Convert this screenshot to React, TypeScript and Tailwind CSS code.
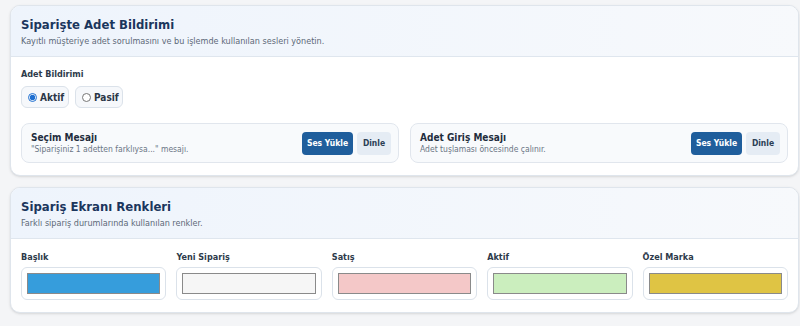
const font = { fontFamily: '"DejaVu Sans Condensed", "DejaVu Sans", sans-serif' };

function SoundCard({ title, desc }: { title: string; desc: string }) {
  return (
    <div className="flex items-center justify-between rounded-lg border border-[#e1e6ed] bg-[#f8fafc] py-[7px] pl-[9px] pr-[7px]">
      <div>
        <div className="text-[10px] font-bold leading-[13px] text-[#1f2d3d]">{title}</div>
        <div className="text-[8.5px] leading-[11px] text-[#6b7685]">{desc}</div>
      </div>
      <div className="flex gap-[4px]">
        <button className="h-[23px] w-[51px] rounded-[4px] bg-[#1f5e9c] text-[8.5px] font-bold text-white">
          Ses Yükle
        </button>
        <button className="h-[23px] w-[34px] rounded-[4px] bg-[#e5ecf4] text-[8.5px] font-bold text-[#2b3f55]">
          Dinle
        </button>
      </div>
    </div>
  );
}

function CardHeader({ title, desc }: { title: string; desc: string }) {
  return (
    <div className="border-b border-[#dfe6ee] bg-gradient-to-r from-[#eef4fc] to-[#f7f9fc] px-[10px] pb-[8px] pt-[10px]">
      <h2 className="text-[13px] font-bold leading-[18px] text-[#1b365d]">{title}</h2>
      <p className="mt-[1px] text-[9px] leading-[13px] text-[#5d6978]">{desc}</p>
    </div>
  );
}

const colors = [
  { label: 'Başlık', color: 'bg-[#369ddc]' },
  { label: 'Yeni Sipariş', color: 'bg-[#f6f6f6]' },
  { label: 'Satış', color: 'bg-[#f4c8c8]' },
  { label: 'Aktif', color: 'bg-[#cbeebe]' },
  { label: 'Özel Marka', color: 'bg-[#dfc444]' },
];

export default function App() {
  return (
    <div className="min-h-[326px] bg-[#f4f5f7] pb-[10px] pl-[10px] pr-[1px] pt-[5px]" style={font}>
      <div className="overflow-hidden rounded-[10px] border border-[#dfe5ec] bg-white shadow-sm">
        <CardHeader
          title="Siparişte Adet Bildirimi"
          desc="Kayıtlı müşteriye adet sorulmasını ve bu işlemde kullanılan sesleri yönetin."
        />
        <div className="px-[10px] pb-[12px] pt-[10px]">
          <div className="text-[9px] font-bold leading-[14px] text-[#2d3a4a]">Adet Bildirimi</div>
          <div className="mt-[5px] flex gap-[6px]">
            <label className="flex h-[22px] w-[48px] items-center gap-[3px] rounded-md border border-[#dbe2ea] bg-[#f6f8fb] px-[6px] text-[10px] font-bold text-[#2a3646]">
              <input type="radio" name="adet" defaultChecked className="h-[9px] w-[9px] accent-[#1f6fd0]" />
              Aktif
            </label>
            <label className="flex h-[22px] w-[48px] items-center gap-[3px] rounded-md border border-[#dbe2ea] bg-[#f6f8fb] px-[6px] text-[10px] font-bold text-[#2a3646]">
              <input type="radio" name="adet" className="h-[9px] w-[9px]" />
              Pasif
            </label>
          </div>
          <div className="mt-[15px] grid grid-cols-2 gap-[11px]">
            <SoundCard title="Seçim Mesajı" desc={'"Siparişiniz 1 adetten farklıysa..." mesajı.'} />
            <SoundCard title="Adet Giriş Mesajı" desc="Adet tuşlaması öncesinde çalınır." />
          </div>
        </div>
      </div>

      <div className="mt-[11px] overflow-hidden rounded-[10px] border border-[#dfe5ec] bg-white shadow-sm">
        <CardHeader title="Sipariş Ekranı Renkleri" desc="Farklı sipariş durumlarında kullanılan renkler." />
        <div className="grid grid-cols-5 gap-[10px] px-[10px] pb-[12px] pt-[11px]">
          {colors.map((c) => (
            <div key={c.label}>
              <div className="text-[9px] font-bold leading-[14px] text-[#2d3a4a]">{c.label}</div>
              <div className="mt-[3px] rounded-md border border-[#dbe2ea] bg-white p-[5px]">
                <div className={`h-[21px] border border-[#8a8a8a] ${c.color}`} />
              </div>
            </div>
          ))}
        </div>
      </div>
    </div>
  );
}
